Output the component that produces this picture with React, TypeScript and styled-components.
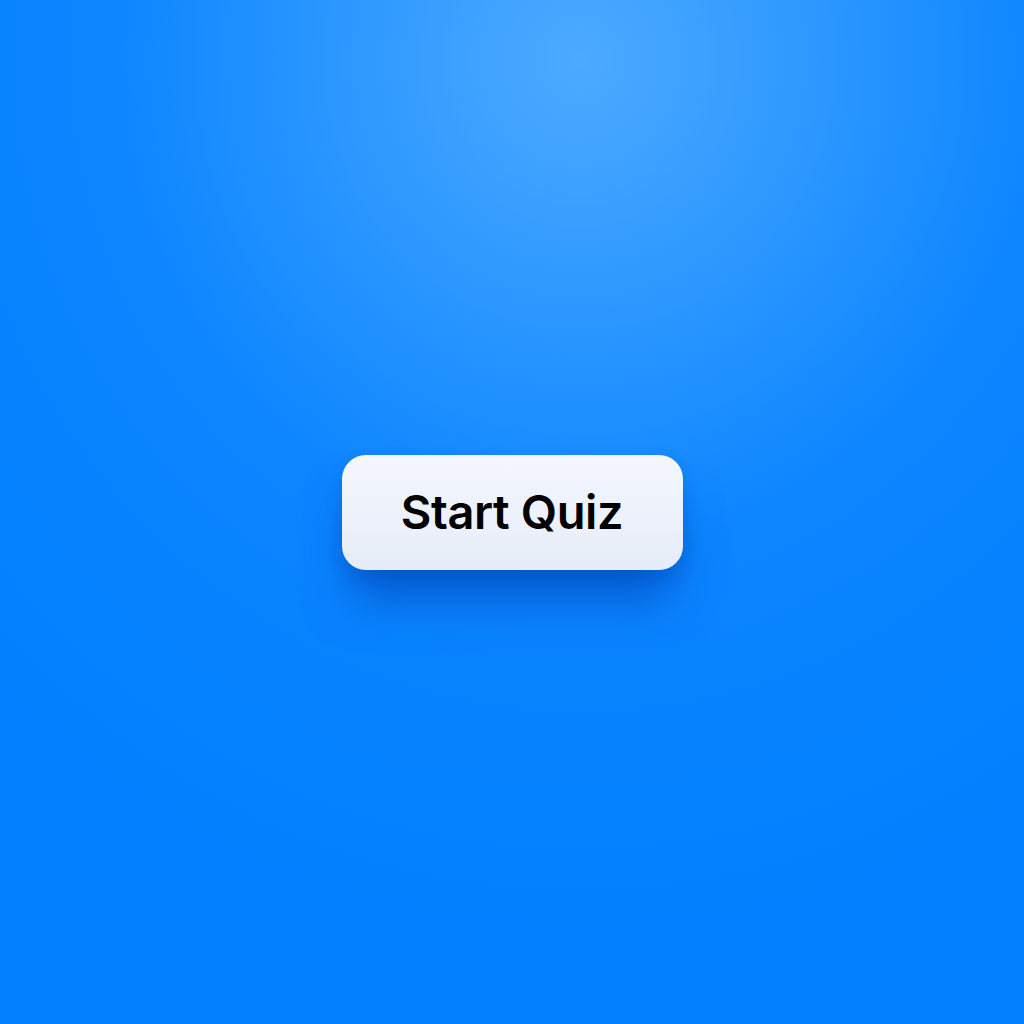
import React from "react";
import styled, { createGlobalStyle } from "styled-components";

const Global = createGlobalStyle`
  html, body { margin: 0; padding: 0; }
  body { font-family: Inter, "Noto Sans", sans-serif; }
`;

const Page = styled.main`
  width: 1024px;
  height: 1024px;
  display: flex;
  align-items: center;
  justify-content: center;
  background:
    radial-gradient(ellipse 860px 900px at 580px 60px, rgba(76, 170, 255, 1) 0%, rgba(56, 158, 255, 0.85) 25%, rgba(28, 140, 255, 0.45) 55%, rgba(0, 128, 255, 0) 100%),
    #0080ff;
`;

const StartButton = styled.button`
  width: 341px;
  height: 115px;
  border: none;
  border-radius: 24px;
  background: linear-gradient(180deg, #f4f7fe 0%, #e6ecf8 100%);
  color: #000;
  font-family: Inter, "Noto Sans", sans-serif;
  font-size: 47px;
  font-weight: 600;
  letter-spacing: -0.4px;
  padding: 0 0 2px;
  cursor: pointer;
  box-shadow: 0 38px 48px -10px rgba(0, 70, 185, 0.7), 0 8px 16px rgba(0, 50, 150, 0.2);
`;

export default function App() {
  return (
    <>
      <Global />
      <Page>
        <StartButton>Start Quiz</StartButton>
      </Page>
    </>
  );
}
